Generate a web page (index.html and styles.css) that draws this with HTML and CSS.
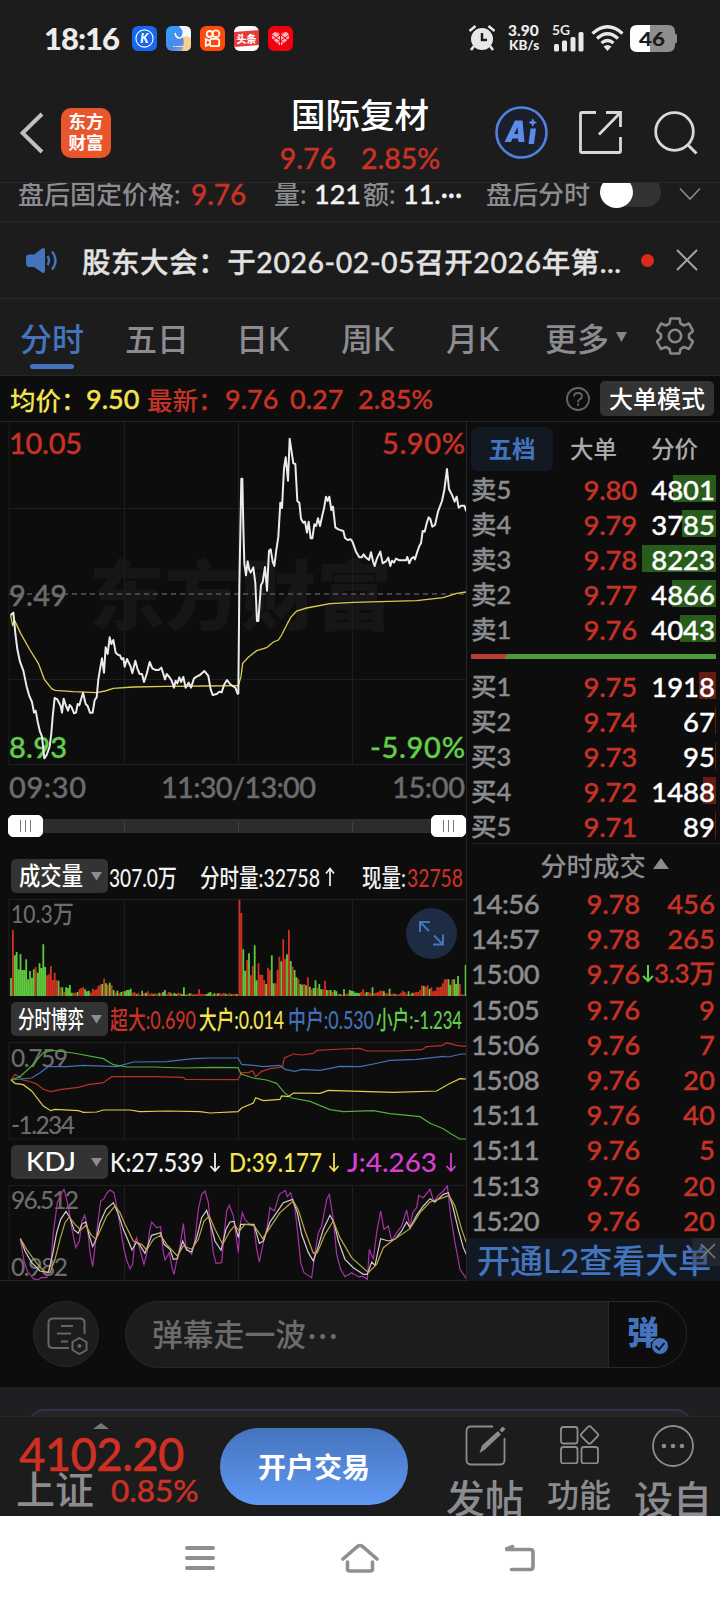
FILE: index.html
```html
<!DOCTYPE html>
<html lang="zh-CN">
<head>
<meta charset="utf-8">
<title>国际复材</title>
<link rel="stylesheet" href="styles.css">
</head>
<body>
<div class="phone">
  <div class="status">
    <span class="clock">18:16</span>
    <div class="apps">
      <svg width="25" height="25" viewBox="0 0 25 25"><rect width="25" height="25" rx="6" fill="#1767f0"/><circle cx="12.5" cy="12.5" r="8.6" fill="none" stroke="#fff" stroke-width="1.1"/><text x="12.4" y="17" font-size="12.5" font-weight="900" font-style="italic" text-anchor="middle" fill="#fff">K</text></svg>
      <svg width="25" height="25" viewBox="0 0 25 25"><defs><linearGradient id="ga" x1="0" y1="0" x2="1" y2="1"><stop offset="0" stop-color="#2aa4ff"/><stop offset=".6" stop-color="#4f86ea"/><stop offset="1" stop-color="#f4b9a4"/></linearGradient></defs><rect width="25" height="25" rx="6" fill="url(#ga)"/><path d="M13 0H19Q25 0 25 6V13Q21 9 17 12Q18 5 13 0Z" fill="#f5f8fb"/><path d="M17 12Q21 9 25 13V19Q25 25 19 25H16Q19 18 17 12Z" fill="#f3d28c"/><path d="M9 7Q10 12 13.500 12Q17 12 17.500 6" fill="none" stroke="#fff" stroke-width="1.600"/><path d="M7 20.500H19" stroke="#dce9ff" stroke-width="1.200" stroke-dasharray="2 .6"/></svg>
      <svg width="25" height="25" viewBox="0 0 25 25"><rect width="25" height="25" rx="6" fill="#ff4b08"/><g fill="none" stroke="#fff" stroke-width="1.800"><circle cx="9.700" cy="8" r="3"/><circle cx="16" cy="7.700" r="3.400"/><rect x="10" y="12.800" width="9.200" height="7.400" rx="2"/><path d="M10 15L5.800 13.200V19.800L10 18"/></g></svg>
      <svg width="25" height="25" viewBox="0 0 25 25"><rect width="25" height="25" rx="6" fill="#fff"/><path d="M0 6L25 4V19L0 21Z" fill="#e93836"/><text x="12.500" y="16.600" font-size="10" font-weight="900" text-anchor="middle" fill="#fff">头条</text></svg>
      <svg width="25" height="25" viewBox="0 0 25 25"><rect width="25" height="25" rx="6" fill="#f3000f"/><path d="M12.500 20L4.500 13Q2.500 8.500 6 6.500Q10 4.500 12.500 8.500Q15 4.500 19 6.500Q22.500 8.500 20.500 13Z" fill="#ffb5b8"/><path d="M4 9L17 18M7 5L20 14M21 9L8 18M18 5L5 14M12.500 7V20" stroke="#f3000f" stroke-width="1"/></svg>
    </div>
    <div class="sys">
      <svg class="alarm" width="28" height="28" viewBox="0 0 28 28"><g fill="#e8e8e8"><circle cx="14" cy="15" r="11"/></g><g stroke="#e8e8e8" stroke-width="2.600" fill="none"><path d="M1.500 7L7.500 2M26.500 7L20.500 2M6 22L3 26M22 22L25 26"/></g><path d="M14 9V16H19" stroke="#1c1c1c" stroke-width="2.400" fill="none"/></svg>
      <div class="net"><span>3.90</span><span>KB/s</span></div>
      <svg class="sig" width="32" height="30" viewBox="0 0 32 30"><text x="0" y="11.500" font-size="13.500" font-weight="700" fill="#e8e8e8" textLength="18" lengthAdjust="spacingAndGlyphs">5G</text><g fill="#e8e8e8"><rect x="2" y="21" width="5" height="7.500" rx="1.500"/><rect x="10" y="17.500" width="5" height="11" rx="1.500"/><rect x="18.500" y="14" width="5" height="14.500" rx="1.500"/><rect x="26.500" y="9" width="5" height="19.500" rx="1.500"/></g></svg>
      <svg class="wifi" width="33" height="28" viewBox="0 0 33 28"><g fill="none" stroke="#e8e8e8" stroke-width="3.200"><path d="M1.500 9.500Q16.500 -4 31.500 9.500"/><path d="M6 14.500Q16.500 5 27 14.500"/><path d="M10.500 19Q16.500 14 22.500 19"/></g><path d="M12.500 22.500Q16.500 19.500 20.500 22.500L16.500 27Z" fill="#e8e8e8"/></svg>
      <svg width="47" height="27" viewBox="0 0 47 27"><path d="M20 0H38Q45 0 45 7V8.500Q47 8.500 47 11V16Q47 18.500 45 18.500V20Q45 27 38 27H20Z" fill="#8e8e8e"/><path d="M7 0H20V27H7Q0 27 0 20V7Q0 0 7 0Z" fill="#fff"/><text x="9" y="20.500" font-size="19.500" font-weight="900" fill="#1c1c1c" textLength="26" lengthAdjust="spacingAndGlyphs">46</text></svg>
    </div>
  </div>

  <header class="nav">
    <div class="nav-left">
      <svg width="24" height="42" viewBox="0 0 24 42"><path d="M22 2L2.500 21L22 40" fill="none" stroke="#c0c0c0" stroke-width="4"/></svg>
      <div class="brand"><span>东方</span><span>财富</span></div>
    </div>
    <div class="nav-title">
      <h1>国际复材</h1>
      <p><span>9.76</span><span>2.85%</span></p>
    </div>
    <div class="nav-right">
      <svg width="53" height="53" viewBox="0 0 53 53"><circle cx="26.500" cy="26.500" r="25" fill="#1a1f2b" stroke="#5083dc" stroke-width="2.600"/><path fill-rule="evenodd" fill="#5b8ce8" d="M9.500 36L20 14.500H27.500L29.500 36H23.500L23 32.500H17.500L16 36ZM19.200 28H23L22.600 21Z"/><path d="M35.500 22.500H41L39 38H33.500Z" fill="#5b8ce8"/><path d="M37.800 12L39 15L42 16.500L39 18L37.800 21L36.500 18L33.500 16.500L36.500 15Z" fill="#5b8ce8"/></svg>
      <svg width="43" height="43" viewBox="0 0 43 43"><path d="M17 1.500H3Q1.500 1.500 1.500 3V40Q1.500 41.500 3 41.500H40Q41.500 41.500 41.500 40V26M27 1.500H41.500V16M41 2L20 23.500" fill="none" stroke="#d8d8d8" stroke-width="2.800"/></svg>
      <svg width="44" height="44" viewBox="0 0 44 44"><circle cx="20.500" cy="20.500" r="18.800" fill="none" stroke="#d8d8d8" stroke-width="2.800"/><path d="M34 34L42.500 42.500" stroke="#d8d8d8" stroke-width="3"/></svg>
    </div>
  </header>

  <div class="after">
    <span class="g">盘后固定价格:</span><span class="r">9.76</span><span class="g">量:</span><span class="w">121</span><span class="g">额:</span><span class="w">11.···</span><span class="g">盘后分时</span>
    <span class="toggle"></span>
    <svg width="22" height="14" viewBox="0 0 22 14"><path d="M1 1.500L11 12L21 1.500" fill="none" stroke="#8a8a8a" stroke-width="1.600"/></svg>
  </div>

  <div class="notice">
    <svg width="33" height="27" viewBox="0 0 33 27"><path d="M4 7.500H9L17 1.500Q20 0 20 3V24Q20 27 17 25.500L9 20H4Q1 20 1 16V11Q1 7.500 4 7.500Z" fill="#4474be"/><path d="M22.500 9Q25.500 13.500 22.500 18M27 4.500Q34 13.500 27 22.500" fill="none" stroke="#4474be" stroke-width="2.400"/></svg>
    <p>股东大会：于2026-02-05召开2026年第...</p>
    <i></i>
    <svg width="22" height="22" viewBox="0 0 22 22"><path d="M1 1L21 21M21 1L1 21" stroke="#a5a5a5" stroke-width="2"/></svg>
  </div>

  <nav class="tabs">
    <span class="on">分时</span><span>五日</span><span>日K</span><span>周K</span><span>月K</span><span class="more">更多<svg width="11" height="10" viewBox="0 0 11 10"><path d="M0 0H11L5.500 10Z" fill="#85858a"/></svg></span>
    <svg width="38" height="38" viewBox="0 0 38 38"><path d="M14.500 1.500H23.500L24.500 6.500L28 8.500L33 6.500L37 14L33 17.500V21L37 24.500L33 32L28 30L24.500 32L23.500 36.500H14.500L13.500 32L10 30L5 32L1 24.500L5 21V17.500L1 14L5 6.500L10 8.500L13.500 6.500Z" fill="none" stroke="#85858a" stroke-width="2.600" stroke-linejoin="round"/><circle cx="19" cy="19" r="6.200" fill="none" stroke="#85858a" stroke-width="2.600"/></svg>
  </nav>

  <div class="info">
    <span class="y">均价：</span><span class="y num">9.50</span><span class="r">最新：</span><span class="r num">9.76</span><span class="r num">0.27</span><span class="r num">2.85%</span>
    <svg width="24" height="24" viewBox="0 0 24 24"><circle cx="12" cy="12" r="11" fill="none" stroke="#666" stroke-width="1.800"/><path d="M8 9.500Q8 6 12 6Q16 6 16 9.300Q16 11.300 13.500 12.500Q12 13.300 12 15.200M12 16.500V18.700" fill="none" stroke="#666" stroke-width="1.800"/></svg>
    <span class="mode">大单模式</span>
  </div>

  <main class="board">
    <section class="charts">
      <svg class="price" width="467" height="343" viewBox="0 422 467 343">
        <g class="wm"><text x="89" y="624" textLength="303" lengthAdjust="spacingAndGlyphs">东方财富</text></g>
        <g class="grid"><path d="M9 422V764.500H467M9 508.500H466M9 679.500H466M124.500 422V765M238.500 422V765M352.500 422V765"/></g>
        <path d="M9 594H466" stroke="#555" stroke-width="1.500" stroke-dasharray="5 4"/>
        <g class="lbl">
          <text class="up" x="9" y="454" textLength="73">10.05</text>
          <text class="up" x="382" y="454" textLength="83">5.90%</text>
          <text class="mid" x="9" y="605.500" textLength="58">9.49</text>
          <text class="down" x="9" y="758" textLength="58">8.93</text>
          <text class="down" x="370" y="758" textLength="95">-5.90%</text>
        </g>
        <g class="avg">
          <path transform="translate(0 420) scale(.33333)" d="M32 586L38 618L43 600L62 640L90 690L115 730L133 778L155 806L165 811L220 815L290 818L315 813L340 805L400 801L500 799L620 798L714 797"/>
          <path transform="translate(230 420) scale(.33333)" d="M24 800L33 770L38 730L55 712L80 692L110 683L130 666L145 660L155 645L170 615L182 592L200 573L230 564L300 551L370 547L450 545L560 542L640 533L680 520L709 516"/>
        </g>
        <g class="last">
          <path transform="translate(0 420) scale(.33333)" d="M32 586L40 578L46 640L52 688L60 725L70 752L80 800L88 828L96 846L102 878L107 872L113 905L120 935L126 950L133 1015L140 1005L149 980L154 940L158 890L164 834L172 838L179 852L182 858L186 878L191 836L197 855L204 872L209 855L215 862L222 880L228 878L233 852L238 856L249 818L257 852L263 858L270 878L278 878L284 840L290 832L295 778L301 742L306 715L312 758L317 682L323 702L329 652L334 672L340 660L347 698L355 705L360 706L365 718L370 714L374 740L381 717L392 740L397 760L406 722L412 745L419 762L426 762L432 786L440 762L449 726L457 745L466 750L476 750L484 743L490 762L495 778L500 762L508 771L515 782L522 803L527 782L532 790L538 772L543 786L550 771L557 803L566 788L573 803L582 775L590 770L600 765L613 753L625 768L632 808L638 825L650 822L658 815L665 817L672 795L681 780L690 792L698 798L706 803L714 824"/>
          <path transform="translate(230 420) scale(.33333)" d="M25 822L28 500L34 176L37 176L40 320L43 430L48 466L53 424L58 450L62 458L70 442L76 490L81 603L85 603L93 495L98 487L105 441L111 512L117 392L122 388L128 425L133 438L139 390L145 350L151 248L156 264L162 145L167 112L174 182L179 56L184 90L190 130L196 132L202 243L208 248L213 296L220 308L225 305L231 338L236 305L242 355L247 355L253 313L258 318L264 295L270 318L276 290L282 265L288 230L293 243L298 230L304 270L309 260L316 322L325 328L340 333L345 354L353 360L362 358L367 364L378 395L388 412L395 412L401 403L407 412L417 420L423 397L429 424L434 438L441 415L451 395L458 430L468 424L475 413L481 438L486 422L492 428L498 416L508 421L528 421L532 411L538 430L544 416L551 411L555 418L562 395L568 378L573 370L578 333L584 335L590 310L596 292L601 297L607 320L615 315L624 275L636 243L643 210L651 147L657 207L667 227L674 245L680 230L686 263L693 257L703 257L709 274"/>
        </g>
      </svg>
      <svg class="axis" width="467" height="45" viewBox="0 765 467 45">
        <g class="lbl"><text class="mid" x="9" y="798" textLength="77">09:30</text><text class="mid" x="161" y="798" textLength="155">11:30/13:00</text><text class="mid" x="392" y="798" textLength="73">15:00</text></g>
      </svg>
      <div class="slider"><span class="knob"></span><span class="tick"></span><span class="tick"></span><span class="tick"></span><span class="knob"></span></div>

      <div class="ind">
        <button>
          <svg width="97" height="34" viewBox="0 0 97 34"><text x="8" y="25.500" font-size="25" textLength="64" lengthAdjust="spacingAndGlyphs">成交量</text><path d="M80 13H91L85.500 21.500Z" fill="#8c8c90"/></svg>
        </button>
        <svg width="358" height="34" viewBox="109 859 358 34"><g fill="#f2f2f2"><text x="109" y="886.500" textLength="68" lengthAdjust="spacingAndGlyphs">307.0万</text><text x="200" y="886.500" textLength="120" lengthAdjust="spacingAndGlyphs">分时量:32758</text><path d="M330 886V869M326 873.500L330 868.500L334 873.500" fill="none" stroke="#f2f2f2" stroke-width="1.700"/><text x="362" y="886.500" textLength="44" lengthAdjust="spacingAndGlyphs">现量:</text><text x="407" y="886.500" fill="#c83226" textLength="56" lengthAdjust="spacingAndGlyphs">32758</text></g></svg>
      </div>
      <div class="pane">
        <svg id="volume" width="467" height="98" viewBox="0 899 467 98">
          <g class="grid"><path d="M9 996V899.500H466M124.500 899V996M238.500 899V996M352.500 899V996"/></g>
          <text x="11" y="923" class="mut" textLength="63" lengthAdjust="spacingAndGlyphs">10.3万</text>
          <path id="vol-up" stroke="#d0301f"/>
          <path id="vol-down" stroke="#5fc93e"/>
        </svg>
        <svg class="expand" width="51" height="51" viewBox="0 0 51 51"><circle cx="25.500" cy="25.500" r="25.500" fill="#1d2b43"/><path d="M14 24V14H24M14 14L23 23M37 26.500V36.500H27M37 36.500L28 27.500" fill="none" stroke="#4474be" stroke-width="2"/></svg>
      </div>

      <div class="ind">
        <button>
          <svg width="97" height="34" viewBox="0 0 97 34"><text x="7" y="25.500" font-size="24" textLength="66" lengthAdjust="spacingAndGlyphs">分时博弈</text><path d="M80 13H91L85.500 21.500Z" fill="#8c8c90"/></svg>
        </button>
        <svg width="358" height="34" viewBox="109 1002 358 34"><text x="110" y="1028.500" fill="#c83226" textLength="86" lengthAdjust="spacingAndGlyphs">超大:0.690</text><text x="199" y="1028.500" fill="#f5e34f" textLength="85" lengthAdjust="spacingAndGlyphs">大户:0.014</text><text x="288" y="1028.500" fill="#4470b8" textLength="86" lengthAdjust="spacingAndGlyphs">中户:0.530</text><text x="376" y="1028.500" fill="#62cf4a" textLength="86" lengthAdjust="spacingAndGlyphs">小户:-1.234</text></svg>
      </div>
      <div class="pane">
        <svg width="467" height="98" viewBox="0 1041 467 98">
          <g class="grid"><path d="M9 1041.500H466M9 1041V1138H466M124.500 1041V1138M238.500 1041V1138M352.500 1041V1138"/></g>
          <text x="11" y="1066" class="mut" textLength="57">0.759</text><text x="11" y="1133" class="mut" textLength="64">-1.234</text>
          <g class="thin" transform="translate(0 855) scale(.33333)">
            <path stroke="#b83228" d="M33 672L45 655L58 662L68 672L85 675L110 684L130 700L152 707L185 700L235 694L265 686L310 680L335 662L460 662L550 664L556 670L714 671L725 650L745 650L758 644L767 662L785 646L810 638L840 634L848 630L853 606L880 594L905 597L940 592L952 583L1025 579L1080 577L1100 585L1190 585L1265 581L1280 572L1325 569L1340 561L1370 568L1399 571"/>
            <path stroke="#4470b8" d="M33 672L95 666L120 650L145 632L200 632L250 628L350 632L400 618L500 617L580 608L640 606L714 606L725 625L760 628L790 632L840 628L855 640L885 646L905 640L960 643L1020 631L1080 632L1120 624L1170 613L1250 610L1330 601L1345 603L1385 594L1399 594"/>
            <path stroke="#4fae3c" d="M33 672L60 662L95 630L130 590L155 583L220 591L310 608L340 626L380 633L460 633L550 636L640 634L714 635L723 654L760 666L800 672L830 682L855 712L875 726L930 736L990 761L1030 767L1120 764L1170 773L1260 782L1290 802L1330 818L1350 832L1380 849L1399 849"/>
            <path stroke="#dfcf4c" d="M33 672L45 682L70 686L95 705L130 750L152 764L165 760L235 764L250 769L290 768L310 762L390 762L420 767L500 765L600 767L630 771L714 767L725 756L760 741L767 725L790 734L840 730L845 720L865 722L880 711L960 712L985 703L1180 709L1310 705L1345 685L1380 668L1399 669"/>
          </g>
        </svg>
      </div>

      <div class="ind">
        <button>
          <svg width="97" height="34" viewBox="0 0 97 34"><text x="15" y="26" font-size="27" textLength="50" lengthAdjust="spacingAndGlyphs">KDJ</text><path d="M80 13H91L85.500 21.500Z" fill="#8c8c90"/></svg>
        </button>
        <svg width="358" height="34" viewBox="109 1144 358 34"><g font-size="27"><text x="110" y="1171" fill="#f2f2f2" textLength="94" lengthAdjust="spacingAndGlyphs">K:27.539</text><text x="229" y="1171" fill="#f5e34f" textLength="93" lengthAdjust="spacingAndGlyphs">D:39.177</text><text x="347" y="1171" fill="#d73fd2" textLength="90" lengthAdjust="spacingAndGlyphs">J:4.263</text></g><g fill="none" stroke-width="1.800"><path stroke="#f2f2f2" d="M215 1152V1170M210.500 1165L215 1170L219.500 1165"/><path stroke="#f5e34f" d="M334 1152V1170M329.500 1165L334 1170L338.500 1165"/><path stroke="#d73fd2" d="M451 1152V1170M446.500 1165L451 1170L455.500 1165"/></g></svg>
      </div>
      <div class="pane">
        <svg width="467" height="97" viewBox="0 1184 467 97">
          <g class="grid"><path d="M9 1281V1184.500H466M124.500 1184V1281M238.500 1184V1281M352.500 1184V1281"/></g>
          <text x="11" y="1208" class="mut" textLength="68">96.512</text><text x="11" y="1275" class="mut" textLength="57">0.982</text>
          <g class="thin" transform="translate(0 855) scale(.33333)">
            <path stroke="#a832a6" d="M61 1148L72 1215L82 1245L100 1268L113 1272L125 1264L140 1265L153 1220L160 1130L172 1040L185 1010L192 1000L200 1030L208 1070L215 1115L227 1175L238 1155L246 1095L254 1078L262 1110L270 1190L278 1232L290 1130L302 1035L312 1028L320 1012L330 1002L342 1010L352 1060L362 1120L372 1180L380 1212L390 1238L398 1225L404 1160L410 1145L417 1170L432 1225L441 1190L448 1130L455 1098L470 1115L482 1112L490 1190L495 1212L508 1190L516 1235L522 1255L530 1215L540 1170L550 1103L558 1175L566 1185L575 1195L585 1150L595 1060L605 1015L615 1005L625 1040L633 1130L640 1190L648 1222L665 1220L673 1130L680 1065L688 1048L700 1080L715 1190L720 1110L727 1070L735 1092L750 1105L762 1110L770 1180L778 1218L790 1160L802 1110L810 1055L823 1065L838 1015L856 1003L862 1022L872 1010L885 1060L893 1130L902 1220L912 1250L935 1265L945 1190L955 1130L965 1110L980 1030L988 1015L1000 1090L1010 1195L1022 1240L1035 1262L1055 1250L1075 1262L1090 1262L1102 1270L1108 1180L1120 1210L1130 1130L1142 1065L1152 1120L1165 1110L1175 1155L1190 1130L1205 1110L1220 1062L1230 1115L1238 1070L1250 1055L1256 1018L1270 1025L1290 1000L1302 1038L1315 1018L1330 1005L1342 990L1352 1080L1365 1160L1380 1240L1399 1268"/>
            <path stroke="#cfcfcf" d="M61 1148L75 1185L95 1220L120 1245L145 1250L158 1195L170 1130L182 1090L198 1066L210 1085L222 1122L235 1132L245 1105L257 1098L268 1140L278 1172L290 1145L300 1100L318 1060L340 1040L355 1075L370 1120L385 1155L396 1182L410 1158L420 1168L435 1192L445 1165L455 1138L482 1130L492 1165L510 1180L520 1210L532 1208L548 1155L560 1182L575 1188L590 1145L605 1085L620 1063L632 1105L645 1155L663 1183L678 1120L690 1098L702 1096L715 1145L722 1105L740 1105L762 1105L778 1162L790 1155L810 1098L830 1070L850 1040L878 1030L892 1070L905 1135L925 1190L940 1215L952 1180L970 1120L990 1078L1002 1100L1015 1155L1035 1210L1060 1235L1090 1255L1102 1255L1115 1218L1125 1228L1142 1148L1165 1155L1185 1150L1205 1125L1220 1098L1230 1115L1250 1078L1270 1050L1290 1028L1305 1038L1330 1015L1345 1010L1358 1050L1375 1120L1390 1175L1399 1195"/>
            <path stroke="#bda63f" d="M61 1148L80 1180L105 1215L130 1245L150 1250L165 1210L180 1150L195 1100L208 1083L225 1105L242 1122L258 1108L272 1135L288 1150L300 1125L320 1080L345 1050L360 1070L375 1105L400 1155L425 1165L440 1182L460 1150L482 1138L500 1165L532 1200L550 1170L575 1180L595 1150L612 1095L628 1080L645 1120L668 1165L690 1125L705 1108L718 1125L735 1105L762 1108L788 1148L810 1115L840 1070L880 1035L895 1062L915 1125L940 1192L952 1190L975 1135L1000 1095L1020 1145L1055 1205L1105 1250L1130 1225L1150 1175L1180 1152L1230 1118L1260 1070L1290 1038L1330 1025L1347 1018L1365 1050L1385 1120L1399 1160"/>
          </g>
        </svg>
      </div>
    </section>

    <aside class="book">
      <div class="seg"><span class="on">五档</span><span>大单</span><span>分价</span></div>
      <ul class="lv">
        <li><b>卖5</b><em>9.80</em><span><i style="width:43px"></i>4801</span></li>
        <li><b>卖4</b><em>9.79</em><span><i style="width:34px"></i>3785</span></li>
        <li><b>卖3</b><em>9.78</em><span><i style="width:74px"></i>8223</span></li>
        <li><b>卖2</b><em>9.77</em><span><i style="width:44px"></i>4866</span></li>
        <li><b>卖1</b><em>9.76</em><span><i style="width:36px"></i>4043</span></li>
      </ul>
      <div class="ratio"></div>
      <ul class="lv buy">
        <li><b>买1</b><em>9.75</em><span><i style="width:17px"></i>1918</span></li>
        <li><b>买2</b><em>9.74</em><span><i style="width:1px"></i>67</span></li>
        <li><b>买3</b><em>9.73</em><span><i style="width:1px"></i>95</span></li>
        <li><b>买4</b><em>9.72</em><span><i style="width:13px"></i>1488</span></li>
        <li><b>买5</b><em>9.71</em><span><i style="width:1px"></i>89</span></li>
      </ul>
      <h2>分时成交<svg width="16" height="11" viewBox="0 0 16 11"><path d="M0 11L8 0L16 11Z" fill="#8c8c90"/></svg></h2>
      <ul class="tk">
        <li><b>14:56</b><em>9.78</em><span>456</span></li>
        <li><b>14:57</b><em>9.78</em><span>265</span></li>
        <li><b>15:00</b><em>9.76</em><span><svg width="12" height="18" viewBox="0 0 12 18"><path d="M6 0V16M1 11L6 16L11 11" fill="none" stroke="#62cf4a" stroke-width="2"/></svg><u>3.3万</u></span></li>
        <li><b>15:05</b><em>9.76</em><span>9</span></li>
        <li><b>15:06</b><em>9.76</em><span>7</span></li>
        <li><b>15:08</b><em>9.76</em><span>20</span></li>
        <li><b>15:11</b><em>9.76</em><span>40</span></li>
        <li><b>15:11</b><em>9.76</em><span>5</span></li>
        <li><b>15:13</b><em>9.76</em><span>20</span></li>
        <li><b>15:20</b><em>9.76</em><span>20</span></li>
      </ul>
      <div class="promo">开通L2查看大单<span class="x"><svg width="16" height="16" viewBox="0 0 16 16"><path d="M1 1L15 15M15 1L1 15" stroke="#777" stroke-width="1.600"/></svg></span></div>
    </aside>
  </main>

  <div class="danmu">
    <span class="dm-set"><svg width="42" height="38" viewBox="0 0 42 38"><g fill="none" stroke="#666" stroke-width="2"><path d="M22 31H6Q1.500 31 1.500 26.500V6Q1.500 1.500 6 1.500H33Q37.500 1.500 37.500 6V17M14 9H26M10 16.500H24M14 24.500H21"/><path d="M32.500 21L39.500 25V33L32.500 37L25.500 33V25Z"/></g><circle cx="32.500" cy="29" r="2" fill="#666"/></svg></span>
    <div class="dm-box"><span>弹幕走一波<u>···</u></span><div class="dm-on">弹<svg width="18" height="18" viewBox="0 0 18 18"><circle cx="9" cy="9" r="8.500" fill="#4474be" stroke="#0d0d0d" stroke-width="1"/><path d="M4.500 9L8 12.500L13.500 6" fill="none" stroke="#0d0d0d" stroke-width="1.800"/></svg></div></div>
  </div>
  <div class="peek"><div></div></div>

  <footer class="bar">
    <div class="index">
      <svg width="16" height="6" viewBox="0 0 16 6"><path d="M0 6L8 0L16 6Z" fill="#77777b"/></svg>
      <strong>4102.20</strong>
      <p><b>上证</b><span>0.85%</span></p>
    </div>
    <a class="open">开户交易</a>
    <div class="act a1"><svg width="41" height="41" viewBox="0 0 41 41"><g fill="none" stroke="#8c8c90" stroke-width="1.800"><path d="M28 1.500H6Q1.500 1.500 1.500 6V35Q1.500 39.500 6 39.500H35Q39.500 39.500 39.500 35V13"/></g><path d="M14.500 28L17 20.500L33 6L36 9.500L20 24.500ZM34.500 5L37.500 1.500L40.500 4L37 7.500Z" fill="#8c8c90"/></svg><span>发帖</span></div>
    <div class="act a2"><svg width="39" height="39" viewBox="0 0 39 39"><g fill="none" stroke="#8c8c90" stroke-width="1.800"><rect x="1" y="2" width="16.500" height="16.500" rx="2.500"/><rect x="1" y="22" width="16.500" height="16.500" rx="2.500"/><rect x="21.500" y="22" width="16.500" height="16.500" rx="2.500"/><path d="M28 1.800Q29.500 .5 31 1.800L37.500 8.500Q38.800 10 37.500 11.500L31 18Q29.500 19.500 28 18L21.500 11.500Q20.200 10 21.500 8.500Z"/></g></svg><span>功能</span></div>
    <div class="act a3"><svg width="42" height="42" viewBox="0 0 42 42"><circle cx="21" cy="21" r="20" fill="none" stroke="#8c8c90" stroke-width="1.800"/><g fill="#8c8c90"><circle cx="12" cy="21" r="2.300"/><circle cx="21" cy="21" r="2.300"/><circle cx="30" cy="21" r="2.300"/></g></svg><span>设自</span></div>
  </footer>

  <div class="keys">
    <svg width="30" height="26" viewBox="0 0 30 26"><path d="M2 3H28M2 13H28M2 23H28" stroke="#8f8f8f" stroke-width="4" stroke-linecap="round"/></svg>
    <svg width="40" height="30" viewBox="0 0 40 30"><path d="M3 16L17.500 3.500Q20 1.500 22.500 3.500L37 16M7.500 19V26Q7.500 28 9.500 28H30.500Q32.500 28 32.500 26V19" fill="none" stroke="#8f8f8f" stroke-width="3.600" stroke-linecap="round"/></svg>
    <svg width="33" height="28" viewBox="0 0 33 28"><path d="M9.500 2.500L2.500 5.500H27Q30 5.500 30 8V23Q30 25.500 27 25.500H8.500" fill="none" stroke="#8f8f8f" stroke-width="3.600" stroke-linecap="round"/></svg>
  </div>
</div>
<script src="volume.js"></script>
</body>
</html>
```
FILE: styles.css
```css
* { box-sizing: border-box; }
body { margin: 0; background: #1c1c1c; }
svg { display: block; flex: none; }
h1, h2, p, ul { margin: 0; padding: 0; font-weight: 500; list-style: none; }
em, i { font-style: normal; }
u { text-decoration: none; }
.phone {
  width: 720px; height: 1600px; overflow: hidden; background: #1c1c1c; color: #8c8c90;
  font-family: Lato, "Noto Sans CJK SC", sans-serif; font-weight: 500; white-space: nowrap;
}

.status { display: flex; align-items: center; height: 76px; padding-left: 44px; color: #ececec; }
.clock { width: 88px; font-size: 31px; font-weight: 900; letter-spacing: -1px; line-height: 36px; }
.apps { display: flex; gap: 9px; width: 336px; }
.sys { display: flex; align-items: center; }
.alarm { margin-right: 12px; }
.net { display: flex; flex-direction: column; width: 44px; font-size: 15.500px; line-height: 15.500px; font-weight: 900; }
.net span + span { font-size: 13.500px; padding-left: 1px; }
.sig { margin-right: 7px; }
.wifi { margin-right: 6px; }

.nav { display: grid; grid-template-columns: 240px 240px 240px; height: 106px; }
.nav-left { display: flex; align-items: center; padding: 7px 0 0 20px; gap: 17px; height: 106px; }
.brand {
  width: 50px; height: 50px; border-radius: 10px; background: #e9562b; color: #fff;
  font-size: 17.500px; font-weight: 700; line-height: 21px; padding-top: 3px;
  display: flex; flex-direction: column; align-items: center;
}
.nav-title { text-align: center; padding-top: 16px; }
.nav-title h1 { color: #fff; font-size: 34.500px; font-weight: 500; line-height: 46px; }
.nav-title p { display: flex; justify-content: center; gap: 25px; color: #c83226; font-size: 28.500px; line-height: 40px; }
.nav-right { display: flex; align-items: center; padding: 7px 0 0 15px; height: 106px; }
.nav-right svg + svg { margin-left: 31px; }
.nav-right svg:last-child { margin-left: 32px; }

/* Numerals carry a hairline outline so they sit at the same weight as the hanzi. */
.nav-title p, .after .r, .after .w, .notice p, .num, .lv li, .tk li, .index strong, .index span { -webkit-text-stroke: .35px currentColor; }

.after {
  display: grid; grid-template-columns: 173px 83px 40px 49px 40px 83px 114px 79px 22px; grid-template-rows: 21px; align-items: center;
  height: 40px; padding-left: 18px; overflow: hidden; border-top: 1px solid #2b2b2b; border-bottom: 1px solid #262626; font-size: 26px; line-height: 34px;
}
.after .r { color: #c83226; font-size: 28px; }
.after .w { color: #f2f2f2; font-size: 27px; }
.toggle { width: 61px; height: 30px; margin-top: -3px; border-radius: 15px; background: #333; display: block; }
.toggle::before { content: ""; position: relative; top: -1px; display: block; width: 33px; height: 32px; border-radius: 50%; background: #fff; }

.notice { display: flex; align-items: center; height: 77px; padding-left: 25px; border-bottom: 1px solid #2b2b2b; }
.notice p { width: 556px; padding-left: 24px; color: #e2e2e2; font-size: 28.500px; letter-spacing: .55px; }
.notice i { width: 13px; height: 13px; margin: 0 22px 0 27px; border-radius: 50%; background: #d92b1c; }

.tabs { display: grid; grid-template-columns: 105px 111px 105px 105px 99px 111px 38px; align-items: center; height: 77px; padding: 3px 0 0 20px; border-bottom: 1px solid #262626; font-size: 32px; line-height: 46px; }
.tabs > svg { margin-top: -5px; }
.tabs .on { color: #4474be; position: relative; }
.tabs .on::after { content: ""; position: absolute; left: 10px; top: 48px; width: 44px; height: 5px; border-radius: 3px; background: #4474be; }
.more { display: flex; align-items: center; gap: 7px; }
.more svg { margin-top: -4px; }

.info { display: grid; grid-template-columns: 76px 61px 78px 65px 68px 209px 33px 114px; align-items: center; height: 46px; padding-left: 10px; background: #0d0d0d; border-bottom: 1px solid #262626; font-size: 25.500px; }
.num { font-size: 27px; }
.info .y { color: #f5e34f; }
.info .r { color: #c83226; }
.info svg { margin-left: -1px; }
.mode { height: 35px; border-radius: 5px; background: #333; color: #fff; font-size: 24px; line-height: 35px; text-align: center; }

.board { display: flex; height: 859px; background: #0d0d0d; border-bottom: 1px solid #262626; }
.charts { width: 467px; border-right: 1px solid #262626; overflow: hidden; }
.grid { fill: none; stroke: #1e1e1e; }
.wm { font-size: 76px; font-weight: 900; fill: #161616; }
.lbl { font-size: 29px; stroke-width: .35px; }
.up { fill: #c83226; stroke: #c83226; }
.mid { fill: #6c6c6c; stroke: #6c6c6c; }
.down { fill: #62cf4a; stroke: #62cf4a; }
.mut { font-size: 24.500px; fill: #6c6c6c; }
.avg { fill: none; stroke: #d9ca50; stroke-width: 4; }
.last { fill: none; stroke: #ebebeb; stroke-width: 6; stroke-linejoin: round; }
.thin { fill: none; stroke-width: 3.600; }
.slider { display: flex; align-items: center; height: 14px; margin: 9px 0 26px 8px; background: #2c2c2e; }
.knob { width: 35px; height: 22px; border-radius: 5px; border: 1px solid #fff; background: repeating-linear-gradient(90deg, #777 0 1.500px, #fff 1.500px 5px) center / 11.500px 12px no-repeat #fff; }
.knob:last-child { margin-left: auto; }
.tick { width: 1px; height: 9px; margin-left: 113px; background: #444; }
.knob + .tick { margin-left: 81px; }
.ind { display: flex; gap: 1px; height: 34px; padding-left: 11px; font-size: 25px; }
.ind button { width: 97px; height: 34px; padding: 0; border: 0; border-radius: 5px; background: #333; font-family: inherit; }
.ind button text { fill: #fff; font-weight: 500; }
.pane { height: 98px; margin: 6px 0 5px; position: relative; }
.expand { position: absolute; left: 406px; top: 9px; }

.book { width: 253px; padding-left: 4px; }
.seg { display: flex; height: 44px; margin: 5px 0 1px; font-size: 23.500px; line-height: 44px; color: #aaaaad; text-align: center; }
.seg span { width: 81px; }
.seg .on { width: 82px; border-radius: 7px; background: #121922; color: #4474be; font-weight: 700; }
.lv li, .tk li { display: grid; grid-template-columns: 99px 67px 78px; height: 35px; line-height: 35px; font-size: 27.500px; }
.lv b, .tk b { font-weight: 500; }
.lv b { font-size: 25.500px; }
.lv em, .tk em { text-align: right; color: #c83226; letter-spacing: -.2px; }
.lv span { position: relative; z-index: 0; text-align: right; color: #fff; letter-spacing: 0; }
.lv i { position: absolute; right: -1px; top: 3px; height: 27px; z-index: -1; background: #285c1a; }
.buy i { background: #661a14; }
.ratio { height: 5px; width: 245px; margin: 7px 0 10px; background: linear-gradient(120deg, #b83e38 31px, #4d9b37 32px); }
.book h2 { display: flex; align-items: center; justify-content: center; gap: 7px; height: 43px; margin-top: -1px; padding: 0 0 1px 18px; border-top: 1px solid #202020; font-size: 26.400px; }
.book h2 svg { margin-top: -2px; }
.tk li { height: 35.200px; line-height: 35.200px; grid-template-columns: 102px 67px 75px; }
.tk b { letter-spacing: -.5px; }
.tk span { display: flex; justify-content: flex-end; align-items: center; color: #c83226; height: 35.200px; }
.tk u { font-size: 26px; letter-spacing: -.3px; }
.promo { position: relative; height: 43px; margin-left: -4px; padding-left: 10px; background: #121922; color: #4474be; font-size: 33px; line-height: 44px; }
.x { position: absolute; right: 0; top: 0; width: 28px; height: 28px; background: rgba(60,60,64,.4); padding: 5px 0 0 8px; }

.danmu { display: flex; gap: 26px; height: 106px; padding: 20px 0 0 33px; background: #0d0d0d; }
.dm-set { width: 66px; height: 66px; border-radius: 50%; background: #1c1c1c; border: 1px solid #282828; padding: 15px 0 0 13px; }
.dm-box { display: flex; justify-content: space-between; width: 562px; height: 67px; border-radius: 34px; background: #1c1c1c; border: 1px solid #282828; overflow: hidden; padding-left: 26px; font-size: 30.800px; line-height: 66px; color: #6c6c6c; }
.dm-box u { letter-spacing: 2.500px; margin-left: 2px; }
.dm-on { position: relative; width: 78px; background: #0d0d0d; border-left: 1px solid #282828; color: #4474be; font-size: 32px; font-weight: 900; padding-left: 18px; line-height: 60px; }
.dm-on svg { position: absolute; left: 42px; top: 35px; }
.peek { height: 29px; padding: 22px 28px 0; background: #1e1e23; overflow: hidden; }
.peek div { height: 40px; border: 2px solid #303250; border-radius: 16px; background: #242426; }

.bar { display: flex; height: 100px; background: #1c1c1c; overflow: hidden; border-top: 1px solid #262626; }
.index { width: 220px; padding: 6px 0 0 19px; }
.index > svg { margin-left: 74px; }
.index strong { display: block; height: 40px; color: #d03022; font-size: 45.500px; font-weight: 500; line-height: 50px; letter-spacing: -.6px; }
.index p { display: flex; gap: 17px; line-height: 42px; }
.index b { font-size: 39px; font-weight: 500; line-height: 40px; margin-left: -3px; }
.index span { color: #c83226; font-size: 31.500px; line-height: 42px; }
.open { width: 188px; height: 77px; margin-top: 11px; border-radius: 39px; background: linear-gradient(#4573bd, #5f99f3); color: #fff; font-size: 28px; font-weight: 700; line-height: 78px; text-align: center; }
.act { display: flex; flex-direction: column; align-items: center; padding-top: 8px; font-size: 39px; line-height: 54px; }
.a1 { width: 82px; margin-left: 36px; }
.a1 span, .a3 span { padding-top: 5px; }
.a2 { width: 66px; margin-left: 20px; font-size: 32px; line-height: 62px; }
.a3 { width: 80px; margin-left: 21px; }
.keys { display: flex; align-items: center; height: 84px; padding-left: 185px; background: #fff; }
.keys svg + svg { margin-left: 125px; }
.keys svg:last-child { margin-left: 123px; }
```
FILE: volume.js
```js
// Per-minute volume bars: colour of the tick (r = up, g = down) followed by its height.
const morning = "g54 r198 g122 g132 g80 g126 g78 g78 g110 g50 g75 g55 g80 r86 g70 g98 g84 g155 g87 r62 r65 r90 r48 r70 r47 g46 r26 g26 r12 g26 g24 g33 g10 r10 r10 g12 r20 r24 r26 g20 g14 g16 r10 r22 r18 r20 r30 r34 g36 r52 g38 r34 g40 r32 g18 r10 g16 r8 g12 r14 g14 g18 g18 g22 r10 r12 g6 r10 r4 g16 r8 g10 r14 r6 r8 g6 r8 r6 g10 r8 g12 g18 r6 r12 g10 r6 g10 g6 r10 r8 g6 g26 g4 r6 g8 r8 g4 r6 r6 r20 r6 r5 r6 g6 g10 g12 r6 g8 r7 g8 r8 r6 r9 g7 r5 r8 g5 r6 r7 g6";
const afternoon = "r289 r249 g140 g76 r108 g128 r62 r90 g152 g47 r98 r64 r64 r48 g36 r85 r77 g122 g38 r38 r78 r118 g104 r170 r112 g125 r198 g105 r88 g78 g56 r50 g36 g34 r36 g32 r56 g28 r20 g24 g47 r24 g36 g20 r20 r46 g18 r18 g18 r12 g18 g14 r6 g6 r4 g20 r6 r8 g18 g16 g14 g10 g10 g8 r12 r20 r10 g12 r12 r8 g26 r8 r10 r12 r16 r16 g14 r8 r8 g22 r6 r8 g6 r4 r6 r10 r16 r12 r6 g14 r6 g10 r10 r12 r12 r18 r32 g30 r28 r32 g22 r26 r14 r16 r26 r26 r28 r38 r50 r50 g50 g34 r50 g50 g36 g60 r36 r6 g2 g93";
const paths = { r: "", g: "" };
function addBars(list, x0) {
  list.split(" ").forEach((bar, i) => {
    paths[bar[0]] += `M${(x0 + i * 1.9).toFixed(1)} 996v-${(bar.slice(1) / 3).toFixed(1)}`;
  });
}
addBars(morning, 11);
addBars(afternoon, 239.5);
for (const [id, key] of [["vol-up", "r"], ["vol-down", "g"]]) {
  const path = document.getElementById(id);
  path.setAttribute("d", paths[key]);
  path.setAttribute("stroke-width", "1.8");
}
```
